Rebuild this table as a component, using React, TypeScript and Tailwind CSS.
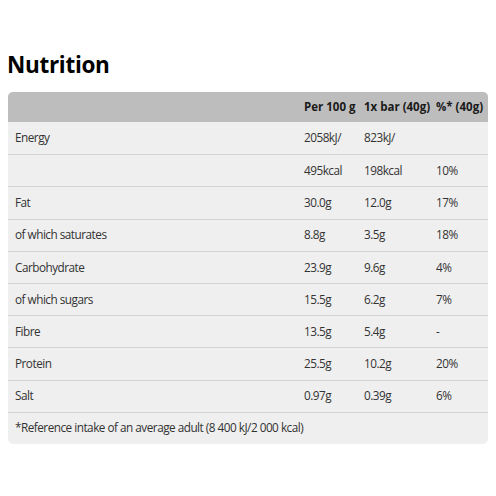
const ROWS: [string, string, string, string][] = [
    ["Energy", "2058kJ/", "823kJ/", ""],
    ["", "495kcal", "198kcal", "10%"],
    ["Fat", "30.0g", "12.0g", "17%"],
    ["of which saturates", "8.8g", "3.5g", "18%"],
    ["Carbohydrate", "23.9g", "9.6g", "4%"],
    ["of which sugars", "15.5g", "6.2g", "7%"],
    ["Fibre", "13.5g", "5.4g", "-"],
    ["Protein", "25.5g", "10.2g", "20%"],
    ["Salt", "0.97g", "0.39g", "6%"],
];

const COLS = "grid grid-cols-[296px_60px_72px_1fr]";

export default function App() {
    return (
        <div className="w-[496px] h-[496px] bg-white text-[#333] font-['Open_Sans',sans-serif]">
            <h1 className="pt-[53px] pl-[7px] text-[22.5px] leading-[23px] font-bold text-black tracking-[-0.3px]">
                Nutrition
            </h1>

            <div className="mt-[16px] mx-[8px] rounded-[5px] overflow-hidden bg-[#efefef] text-[11.75px] tracking-[-0.5px]">
                {/* header */}
                <div className={`${COLS} h-[30px] items-center bg-[#bdbdbd] font-bold text-[11.5px] tracking-normal text-[#1a1a1a]`}>
                    <div />
                    <div>Per 100 g</div>
                    <div>1x bar (40g)</div>
                    <div>%* (40g)</div>
                </div>

                {ROWS.map((r, i) => (
                    <div
                        key={i}
                        className={`${COLS} h-[32.2px] items-center ${i > 0 ? "border-t border-[#d3d3d3]" : ""}`}
                    >
                        <div className="pl-[7px]">{r[0]}</div>
                        <div>{r[1]}</div>
                        <div>{r[2]}</div>
                        <div>{r[3]}</div>
                    </div>
                ))}

                <div className="h-[32.2px] flex items-center pl-[7px] border-t border-[#d3d3d3]">
                    *Reference intake of an average adult (8 400 kJ/2 000 kcal)
                </div>
            </div>
        </div>
    );
}
